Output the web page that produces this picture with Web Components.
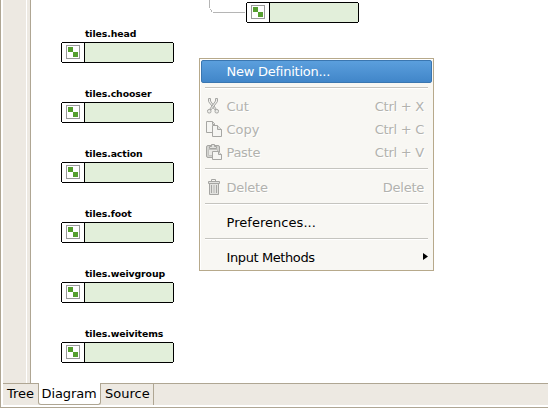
<!DOCTYPE html>
<html lang="en"><head><meta charset="utf-8"><title>Tiles diagram</title>
<style>html,body{margin:0;height:100%;overflow:hidden;background:#fff}body{font:13px/23px "DejaVu Sans",sans-serif;color:#000}</style></head>
<body>
<tiles-editor>
  <diagram-canvas slot="canvas">
    <tile-node style="left:215px;top:2px"></tile-node>
    <tile-node style="left:30px;top:42px" label="tiles.head"></tile-node>
    <tile-node style="left:30px;top:102px" label="tiles.chooser"></tile-node>
    <tile-node style="left:30px;top:162px" label="tiles.action"></tile-node>
    <tile-node style="left:30px;top:222px" label="tiles.foot"></tile-node>
    <tile-node style="left:30px;top:282px" label="tiles.weivgroup"></tile-node>
    <tile-node style="left:30px;top:342px" label="tiles.weivitems"></tile-node>
  </diagram-canvas>
  <page-tab slot="tabs" style="width:35px;border-right:0">Tree</page-tab><page-tab slot="tabs" selected style="width:63px;letter-spacing:-.1px">Diagram</page-tab><page-tab slot="tabs" style="width:53px">Source</page-tab>
  <context-menu slot="menu">
    <menu-item active style="--track:-.25px">New Definition...</menu-item>
    <menu-rule></menu-rule>
    <menu-item disabled icon="cut" keys="Ctrl + X">Cut</menu-item>
    <menu-item disabled icon="copy" keys="Ctrl + C">Copy</menu-item>
    <menu-item disabled icon="paste" keys="Ctrl + V" style="--track:-.3px">Paste</menu-item>
    <menu-rule></menu-rule>
    <menu-item disabled icon="delete" keys="Delete" style="--track:-.25px">Delete</menu-item>
    <menu-rule></menu-rule>
    <menu-item style="--track:.04px">Preferences...</menu-item>
    <menu-rule></menu-rule>
    <menu-item submenu style="--track:-.4px">Input Methods</menu-item>
  </context-menu>
</tiles-editor>
<script>
const define=(name,html)=>customElements.define(name,class extends HTMLElement{
  connectedCallback(){
    if(this.shadowRoot)return;
    const r=this.attachShadow({mode:'open'});
    r.innerHTML=typeof html==='function'?html(this):html;
  }
});
const icons={
cut:`<g fill="#ecece9" stroke="#a6a6a3"><path d="M3.500 .5h2v2.500l6 8.500h-2l-6-8z"/><path d="M12.500 .5h-2v2.500l-6 8.500h2l6-8z"/><rect x="2.500" y="11.500" width="3.500" height="3.500" rx="1.500"/><rect x="10" y="11.500" width="3.500" height="3.500" rx="1.500"/></g>`,
copy:`<g fill="#f5f5f2" stroke="#a6a6a3"><path d="M1.500 .5h6l2 2v9h-8z"/><path fill="#e0e0dd" d="M7.500 .5v3h2"/><path d="M7.500 4.500h5l4 4v7h-9z"/><path fill="#e0e0dd" d="M12.500 4.500v4h4"/></g>`,
paste:`<g stroke="#a6a6a3"><rect x="1.500" y="1.500" width="13" height="12" rx="1.500" fill="#d3d3d0"/><path fill="#e9e9e6" d="M3.500 5.500h9v6h-9z" stroke="#c2c2bf"/><path fill="#e2e2df" d="M4.500 4.500v-2h2v-2h3v2h2v2z"/><path fill="#f5f5f2" d="M7.500 7.500h6l3 3v5h-9z"/><path fill="#e0e0dd" d="M13.500 7.500v3h3"/></g>`,
delete:`<g fill="none" stroke="#a6a6a3"><path d="M6.500 2.500v-2h4v2"/><path fill="#e2e2df" d="M3.500 2.500h11v2h-11zM4.500 4.500h9v11h-9z"/><path d="M6.500 6v8M11.500 6v8"/><path stroke="#b8b8b5" d="M9 6v8"/></g>`
};
define('tiles-editor',`<style>
:host{display:grid;grid-template-rows:383px 1fr;box-sizing:border-box;height:408px;border-left:1px solid #afa693;border-bottom:1px solid #afa693;padding-left:2px;background:#fff}
.view{display:grid;grid-template-columns:23px 1px 3px 1fr}
.view i{background:#ede9e2}.canvas{border-left:1px solid #afa693}
.tabs{display:flex;height:21px;border-top:1px solid #afa693;background:#ede9e2}
</style><div class="view"><i></i><span></span><i></i><div class="canvas"><slot name="canvas"></slot></div></div>
<div class="tabs"><slot name="tabs"></slot></div><slot name="menu"></slot>`);
define('diagram-canvas',`<style>:host{display:block;position:relative;height:383px;overflow:hidden}
svg{position:absolute;left:178px;top:0}</style>
<svg width="38" height="14" fill="#b5b5b5"><path d="M0 0h1v8h-1zM1 9h1v1h-1zM2 10h1v1h-1zM2 11h1v1h-1zM4 12h32v1h-32z"/></svg><slot></slot>`);
define('tile-node',e=>`<style>
:host{position:absolute;width:113px;height:21px}
b{position:absolute;left:24px;top:-14px;font-size:9.33px;letter-spacing:-.1px;line-height:12px;white-space:nowrap}
svg{display:block}</style><b>${e.getAttribute('label')||''}</b>
<svg width="113" height="21" shape-rendering="crispEdges"><path fill="#e2efda" d="M24 1h88v19h-88z"/><path d="M1 0h111v1h-111zM1 20h111v1h-111zM0 1h1v19h-1zM112 1h1v19h-1zM23 1h1v19h-1z"/><path fill="none" stroke="#999" d="M5.500 3.500h13v13h-13z"/><path fill="#559e2f" d="M7 5h5v5h-5zM12 10h5v5h-5z"/></svg>`);
define('page-tab',`<style>
:host{display:block;box-sizing:border-box;height:21px;border-right:1px solid #afa693;padding-left:4px;line-height:20px;white-space:nowrap}
:host([selected]){background:#fff;border:1px solid #afa693;border-top:0;border-radius:0 0 3px 3px;margin-top:-1px;height:22px;padding:1px 0 0 2.5px}
</style><slot></slot>`);
define('context-menu',`<style>
:host{position:absolute;left:199px;top:58px;box-sizing:border-box;width:235px;height:213px;border:1px solid #b7a98b;padding:1px;background:#f8f7f3;box-shadow:inset 1px 1px #fff}
</style><slot></slot>`);
define('menu-rule',`<style>:host{display:block;height:12px;padding:4px 4px 0;box-sizing:border-box}
div{height:1px;background:#c5c4bf;border-bottom:1px solid #fff}</style><div></div>`);
define('menu-item',e=>`<style>
:host{display:flex;box-sizing:border-box;height:23px;padding:0 8px 0 4px;white-space:pre;line-height:23px}
:host([active]){color:#fff;background:linear-gradient(#5b9fdd,#4186c9);border:1px solid #3a76b0;border-radius:2px;padding:0 7px 0 3px;line-height:21px}
:host([disabled]){color:#b2b2ae;text-shadow:1px 1px #fff}
.icon{width:21.5px;flex:none}.icon svg{display:block;margin-top:3px}
.label{flex:1;letter-spacing:var(--track,0)}.keys{letter-spacing:-.25px}.arrow{margin:6px -4px 0 0}
</style><span class="icon">${icons[e.getAttribute('icon')]?`<svg width="17" height="17">${icons[e.getAttribute('icon')]}</svg>`:''}</span><span class="label"><slot></slot></span><span class="keys">${e.getAttribute('keys')||''}</span>${e.hasAttribute('submenu')?'<svg class="arrow" width="5" height="9"><path d="M0 1l5 3.500-5 3.500z"/></svg>':''}`);
</script></body></html>
